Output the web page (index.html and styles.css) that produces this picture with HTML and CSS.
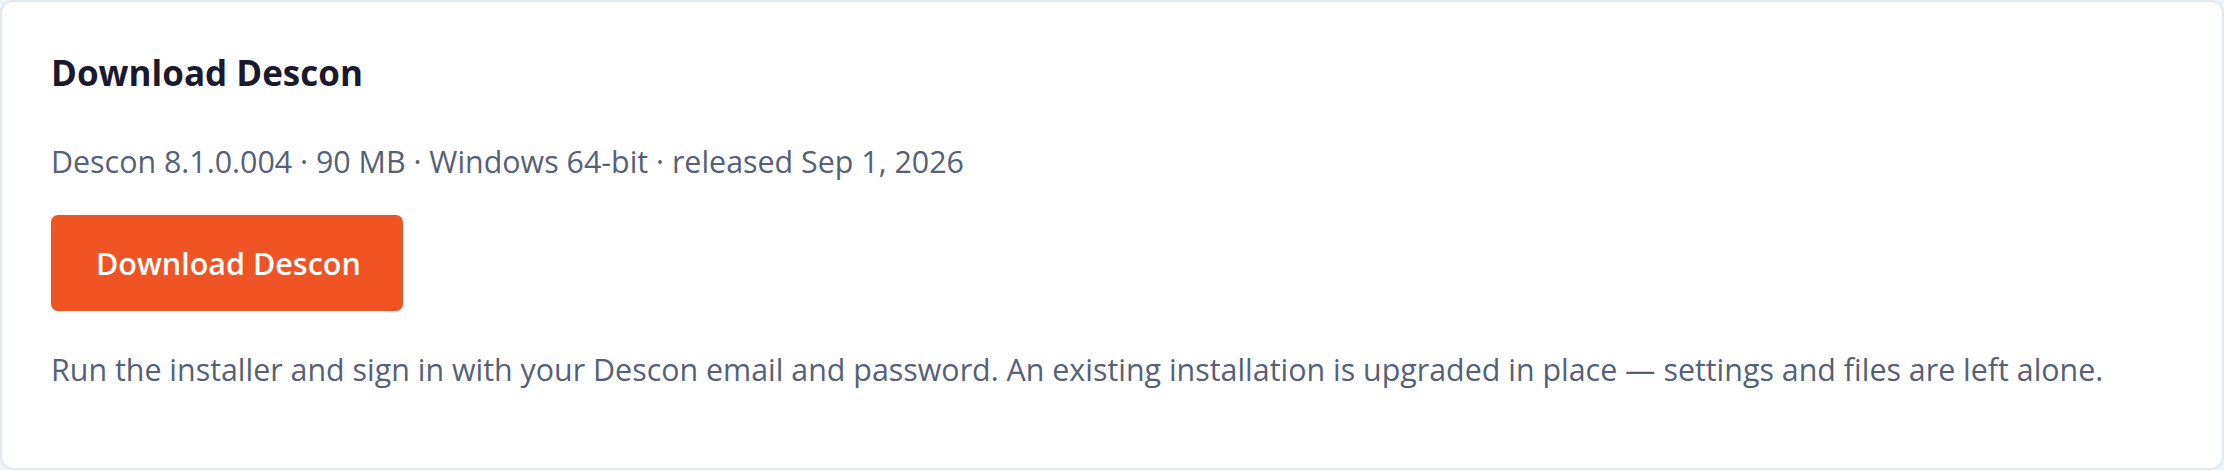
FILE: index.html
```html
<!DOCTYPE html>
<html lang="en">
<head>
    <meta charset="UTF-8">
    <meta name="viewport" content="width=device-width, initial-scale=1.0">
    <title>Download Descon</title>
    <link rel="stylesheet" href="styles.css">
</head>
<body>

    <div class="card">
        <h2 class="card-title">Download Descon</h2>
        <p class="meta">Descon 8.1.0.004 · 90 MB · Windows 64-bit · released Sep 1, 2026</p>
        <div>
            <a class="download-btn" href="#">Download Descon</a>
        </div>
        <p class="note">Run the installer and sign in with your Descon email and password. An existing installation is upgraded in place — settings and files are left alone.</p>
    </div>

</body>
</html>
```

FILE: styles.css
```css
body {
    font-family: "Open Sans", "Noto Sans", sans-serif;
    background-color: #eef1f5;
    margin: 0;
}
.card {
    box-sizing: border-box;
    min-height: 100vh;
    padding: 50px 49px 40px;
    background-color: #fff;
    border: 2px solid #e2e8f0;
    border-radius: 14px;
}
.card-title {
    margin: 0;
    font-size: 35px;
    line-height: 42px;
    font-weight: 700;
    color: #1b1a2c;
}
.meta {
    margin: 47px 0 0;
    font-size: 30.4px;
    line-height: 42px;
    color: #566176;
}
.download-btn {
    display: inline-block;
    margin-top: 32px;
    padding: 26px 42px 26px 45px;
    font-size: 30.5px;
    line-height: 44px;
    font-weight: 600;
    color: #fff;
    text-decoration: none;
    background-color: #f05424;
    border-radius: 7px;
}
.note {
    margin: 38px 0 0;
    font-size: 30.4px;
    line-height: 42px;
    color: #566176;
}
```
